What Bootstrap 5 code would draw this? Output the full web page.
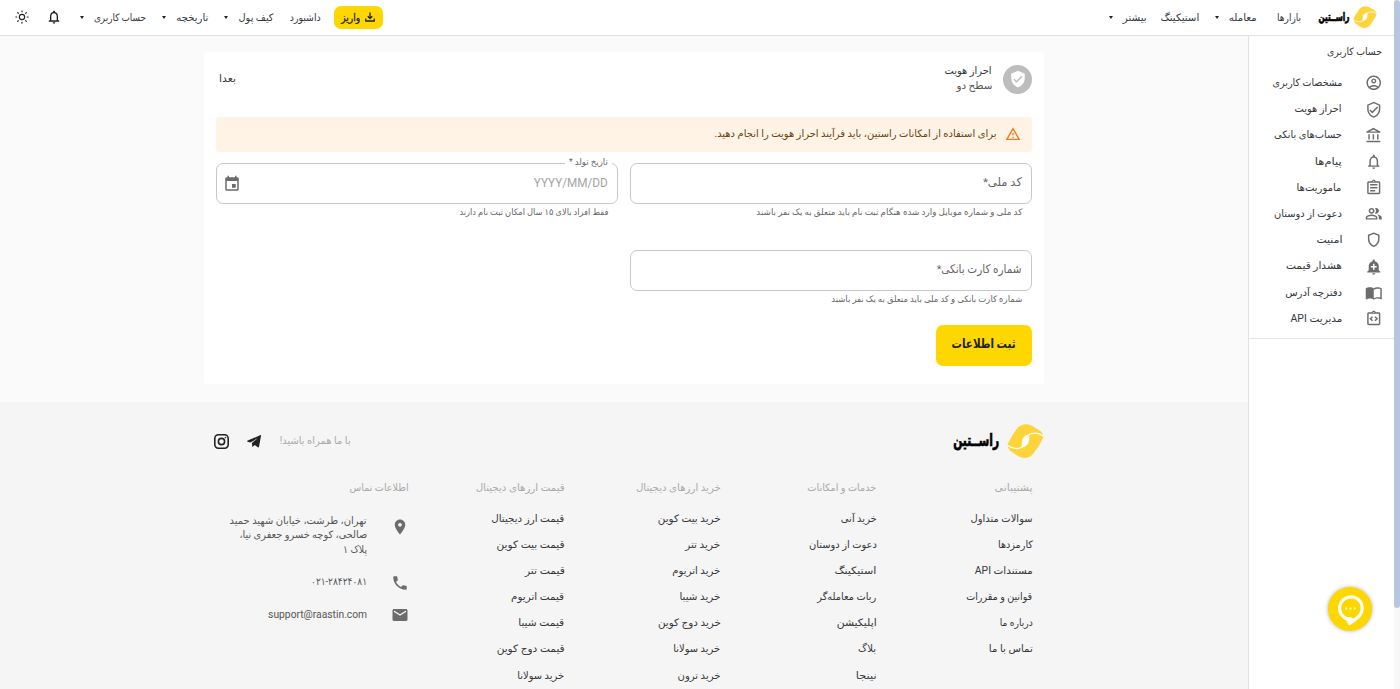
<!DOCTYPE html>
<html lang="fa" dir="rtl">
<head>
<meta charset="utf-8">
<meta name="viewport" content="width=device-width, initial-scale=1">
<title>راستین - احراز هویت</title>
<link href="https://cdn.jsdelivr.net/npm/bootstrap@5.3.0/dist/css/bootstrap.min.css" rel="stylesheet">
<style>
:root{--gold:#ffd700;--ink:#35373b;--soft:#6c6c6c}
html,body{height:100%}
body{font-family:Roboto,"DejaVu Sans",sans-serif;font-size:10.2px;line-height:15px;color:var(--ink);background:#fff;overflow:hidden}
svg{display:block;flex:none;fill:currentColor}
.fit{display:inline-block;white-space:nowrap;flex:none;text-align:right}
.fit>i{display:inline-block;font-style:normal;transform-origin:100% 50%}
.page-area{width:1394px;height:689px}
.scroll-rail{width:6px;height:689px;background:#f8f8f8}
.scroll-thumb{height:608px;background:#b9c7dc;border-radius:3px}
.topbar{height:36px;border-bottom:1px solid #e2e2e2;padding:0 17px 1px 15px;background:#fff}
.caret{width:0;height:0;border:2.5px solid transparent;border-top:3px solid #222;border-bottom:0;margin-top:1px}
.wordmark{font-family:"DejaVu Sans",sans-serif;font-weight:700;color:#000;-webkit-text-stroke:.7px #000}
.deposit{width:49px;height:23px;border-radius:7px;background:var(--gold);color:#222}
.side{width:146px;border-left:1px solid #e2e2e2;height:653px}
.side-box{height:303px;border-bottom:1px solid #e5e5e5;padding:8px 12px 0 0}
.side-row{height:26.2px}
.side-row svg{color:var(--soft);margin-left:22.5px}
.side-row .fit{margin-bottom:1px}
.side-list{padding-top:11px}
.content{width:1248px;background:#fafafa}
.kyc{width:840px;height:332px;background:#fff;border-radius:4px;padding:12px;margin:16px auto 18px}
.shield{width:29px;height:29px;border-radius:50%;background:#bdbdbd;color:#fff}
.notice{height:35px;background:#fff3e5;color:#6b4510;border-radius:3px;padding:0 11px 0 12px;margin-top:23px}
.notice .fit{margin-bottom:2px}
.notice svg{margin-bottom:1px}
.field{height:41px;border:1px solid #c8c8c8;border-radius:7px;padding:0 9px;color:#666;font-size:11.8px;position:relative}
.field>.fit{margin-bottom:3px}
.field-name{position:absolute;top:-9px;right:5px;background:#fff;padding:0 4px;font-size:9px;line-height:15px;color:#666}
.helper{font-size:8.8px;height:17px;line-height:17px;color:#666;padding-right:9.5px}
.submit{width:96px;height:41px;border-radius:7px;background:var(--gold);font-size:13px;font-weight:700;color:#222}
.foot{background:#f5f5f5;height:287px}
.foot-in{width:840px;margin:auto}
.brand-row{height:78px;padding-left:10px}
.fcol{width:156px;padding-right:11.5px}
.fhead{height:16px;color:#aaa;margin-bottom:14.5px}
.frow{height:26.2px}
.contact{width:204px}
.contact svg{color:var(--soft)}
.chat{position:absolute;left:1328px;top:587px;width:44px;height:44px;border-radius:50%;background:var(--gold);box-shadow:0 0 4px rgba(0,0,0,.3)}
</style>
<script src="https://cdn.jsdelivr.net/npm/bootstrap@5.3.0/dist/js/bootstrap.bundle.min.js"></script>
</head>
<body>
<svg width="0" height="0" class="position-absolute"><defs>
<symbol id="mark" viewBox="0 0 36 34"><path fill="#fdd53b" d="M0 21C1 17 7 8 10 4 14 0 19-.5 24 1.500L33 7c1.500 1.500 2.500 3 3 5.500C34 18 29 26 25.500 30 22 34.500 15 35 10.500 32L3 27C1.500 25.500.5 23.500 0 21Z"/><path fill="none" stroke="#fff" stroke-width="1.200" d="M0 21.200c4 3 9.500 4.200 14 2.300M36 12.300C32 9 26.500 8.200 21.500 10.500"/><path fill="#fff" d="M22.500 9.800c-4.500 1.200-7.500 3.600-8 7.400-.2 2.300-.2 4-.9 6.800 4.600-1.200 7.100-3.400 7.800-7 .4-2.500 0-4.600 1.100-7.200Z"/></symbol>
<symbol id="bell" viewBox="0 0 24 24"><path d="M12 22c1.100 0 2-.9 2-2h-4c0 1.100.9 2 2 2zm6-6v-5c0-3.070-1.630-5.640-4.500-6.320V4c0-.83-.67-1.500-1.500-1.500s-1.500.67-1.500 1.500v.68C7.640 5.360 6 7.920 6 11v5l-2 2v1h16v-1l-2-2zm-2 1H8v-6c0-2.480 1.510-4.500 4-4.500s4 2.020 4 4.500v6z"/></symbol>
</defs></svg>
<div class="d-flex">
<div class="scroll-rail order-first"><div class="scroll-thumb"></div></div>
<div class="page-area">
<nav class="topbar d-flex align-items-center">
  <svg width="24" height="22"><use href="#mark"/></svg>
  <span class="fit wordmark" data-w="31" style="margin-right:4px;font-size:11.500px">راســتین</span>
  <span class="fit" data-w="24" style="margin-right:17px">بازارها</span>
  <span class="fit" data-w="28" style="margin-right:20px">معامله</span>
  <b class="caret" style="margin-right:10px"></b>
  <span class="fit" data-w="39" style="margin-right:16px">استیکینگ</span>
  <span class="fit" data-w="24" style="margin-right:13px">بیشتر</span>
  <b class="caret" style="margin-right:10px"></b>
  <div class="deposit d-flex align-items-center justify-content-center gap-1 me-auto">
    <svg width="12" height="12" viewBox="0 0 24 24" stroke="currentColor" stroke-width="2.600"><path fill="none" d="M3.500 15v5h17v-5M12 3v12M7.500 10.500 12 15l4.500-4.500"/></svg>
    <span class="fit" data-w="19" style="-webkit-text-stroke:.3px">واریز</span>
  </div>
  <span class="fit" data-w="31" style="margin-right:13px">داشبورد</span>
  <span class="fit" data-w="35" style="margin-right:17px">کیف پول</span>
  <b class="caret" style="margin-right:10px"></b>
  <span class="fit" data-w="32" style="margin-right:16px">تاریخچه</span>
  <b class="caret" style="margin-right:10px"></b>
  <span class="fit" data-w="52" style="margin-right:16px">حساب کاربری</span>
  <b class="caret" style="margin-right:10px"></b>
  <svg width="16" height="16" style="margin-right:18px;color:#222"><use href="#bell"/></svg>
  <svg width="14" height="14" viewBox="0 0 24 24" style="margin-right:17px" stroke="#222" stroke-width="2"><circle cx="12" cy="12" r="4.500" fill="none"/><path stroke-linecap="round" d="M12 1.500v1.500M12 21v1.500M1.500 12h1.500M21 12h1.500M4.600 4.600l1 1M18.400 18.400l1 1M4.600 19.400l1-1M18.400 5.600l1-1"/></svg>
</nav>
<div class="d-flex">
<aside class="side">
  <div class="side-box">
  <span class="fit" data-w="55">حساب کاربری</span>
  <div class="side-list">
    <div class="side-row d-flex align-items-center"><svg width="17.500" height="17.500" viewBox="0 0 24 24"><path d="M12 2C6.480 2 2 6.480 2 12s4.480 10 10 10 10-4.480 10-10S17.520 2 12 2zM7.350 18.500C8.660 17.560 10.260 17 12 17s3.340.56 4.650 1.500C15.340 19.440 13.740 20 12 20s-3.340-.56-4.650-1.500zm10.790-1.380C16.450 15.800 14.320 15 12 15s-4.450.8-6.140 2.120C4.700 15.730 4 13.950 4 12c0-4.420 3.580-8 8-8s8 3.580 8 8c0 1.950-.7 3.730-1.860 5.120z"/><path d="M12 6c-1.930 0-3.500 1.570-3.500 3.500S10.070 13 12 13s3.500-1.570 3.500-3.500S13.930 6 12 6zm0 5c-.83 0-1.500-.67-1.500-1.500S11.170 8 12 8s1.500.67 1.500 1.500S12.830 11 12 11z"/></svg><span class="fit" data-w="70">مشخصات کاربری</span></div>
    <div class="side-row d-flex align-items-center"><svg width="17.500" height="17.500" viewBox="0 0 24 24"><path d="M12 1 3 5v6c0 5.550 3.840 10.740 9 12 5.160-1.260 9-6.450 9-12V5l-9-4zm7 10c0 4.520-2.980 8.690-7 9.930-4.020-1.240-7-5.410-7-9.930V6.300l7-3.110 7 3.110V11zm-11.590.59L6 13l4 4 8-8-1.410-1.420L10 14.170z"/></svg><span class="fit" data-w="47">احراز هویت</span></div>
    <div class="side-row d-flex align-items-center"><svg width="17.500" height="17.500" viewBox="0 0 24 24"><path d="M6.500 10h-2v7h2v-7zm6 0h-2v7h2v-7zm8.500 9H2v2h19v-2zm-2.500-9h-2v7h2v-7zm-7-6.740L16.710 6H6.290l5.210-2.740m0-2.260L2 6v2h19V6l-9.500-5z"/></svg><span class="fit" data-w="68">حساب‌های بانکی</span></div>
    <div class="side-row d-flex align-items-center"><svg width="17.500" height="17.500"><use href="#bell"/></svg><span class="fit" data-w="27">پیام‌ها</span></div>
    <div class="side-row d-flex align-items-center"><svg width="17.500" height="17.500" viewBox="0 0 24 24"><path d="M7 15h7v2H7zm0-4h10v2H7zm0-4h10v2H7zm12-4h-4.180C14.400 1.840 13.300 1 12 1c-1.300 0-2.400.84-2.820 2H5c-1.100 0-2 .9-2 2v14c0 1.100.9 2 2 2h14c1.100 0 2-.9 2-2V5c0-1.100-.9-2-2-2zm-7-.25c.41 0 .75.34.75.75s-.34.75-.75.75-.75-.34-.75-.75.34-.75.75-.75zM19 19H5V5h14v14z"/></svg><span class="fit" data-w="45">ماموریت‌ها</span></div>
    <div class="side-row d-flex align-items-center"><svg width="17.500" height="17.500" viewBox="0 0 24 24"><path d="M16.670 13.130C18.040 14.060 19 15.320 19 17v3h4v-3c0-2.180-3.570-3.470-6.330-3.870zM15 12c2.210 0 4-1.790 4-4s-1.790-4-4-4c-.47 0-.91.1-1.330.24C14.500 5.270 15 6.580 15 8s-.5 2.730-1.330 3.760c.42.14.86.24 1.330.24zM9 12c2.210 0 4-1.790 4-4s-1.790-4-4-4-4 1.790-4 4 1.790 4 4 4zm0-6c1.100 0 2 .9 2 2s-.9 2-2 2-2-.9-2-2 .9-2 2-2zm0 7c-2.670 0-8 1.340-8 4v3h16v-3c0-2.660-5.330-4-8-4zm6 5H3v-.99C3.200 16.290 6.300 15 9 15s5.800 1.290 6 2v1z"/></svg><span class="fit" data-w="68">دعوت از دوستان</span></div>
    <div class="side-row d-flex align-items-center"><svg width="17.500" height="17.500" viewBox="0 0 24 24"><path d="M12 2 4 5v6.090c0 5.050 3.410 9.760 8 10.910 4.590-1.150 8-5.860 8-10.910V5l-8-3zm6 9.090c0 4-2.550 7.700-6 8.830-3.450-1.130-6-4.820-6-8.830v-4.700l6-2.250 6 2.250v4.700z"/></svg><span class="fit" data-w="26">امنیت</span></div>
    <div class="side-row d-flex align-items-center"><svg width="17.500" height="17.500" viewBox="0 0 24 24"><path d="M10.010 21.010c0 1.100.89 1.990 1.990 1.990s1.990-.89 1.990-1.990h-3.980zm8.870-4.190V11c0-3.250-2.250-5.970-5.290-6.690v-.72C13.590 2.710 12.880 2 12 2s-1.590.71-1.590 1.590v.72C7.370 5.030 5.120 7.750 5.120 11v5.820L3 18.940V20h18v-1.060l-2.120-2.120zM16 13.010h-3v3h-2v-3H8V11h3V8h2v3h3v2.010z"/></svg><span class="fit" data-w="56">هشدار قیمت</span></div>
    <div class="side-row d-flex align-items-center"><svg width="17.500" height="17.500" viewBox="0 0 24 24"><path d="M21 5c-1.110-.35-2.330-.5-3.500-.5-1.950 0-4.050.4-5.500 1.500-1.450-1.100-3.550-1.500-5.500-1.500S2.450 4.900 1 6v14.650c0 .25.250.5.5.5.1 0 .15-.05.25-.05C3.100 20.450 5.050 20 6.500 20c1.950 0 4.050.4 5.500 1.500 1.350-.85 3.800-1.500 5.500-1.500 1.650 0 3.350.3 4.750 1.050.1.050.15.050.25.050.25 0 .5-.25.5-.5V6c-.6-.45-1.250-.75-2-1zm0 13.500c-1.100-.35-2.300-.5-3.500-.5-1.700 0-4.150.65-5.500 1.500V8c1.350-.85 3.800-1.500 5.500-1.500 1.200 0 2.400.15 3.500.5v11.500z"/></svg><span class="fit" data-w="57">دفترچه آدرس</span></div>
    <div class="side-row d-flex align-items-center"><svg width="17.500" height="17.500" viewBox="0 0 24 24"><path d="M11 14.170 8.830 12 11 9.830 9.590 8.410 6 12l3.590 3.590zm3.410 1.420L18 12l-3.590-3.590L13 9.830 15.170 12 13 14.170zM19 3h-4.180C14.400 1.840 13.300 1 12 1c-1.300 0-2.400.84-2.820 2H5c-1.100 0-2 .9-2 2v14c0 1.100.9 2 2 2h14c1.100 0 2-.9 2-2V5c0-1.100-.9-2-2-2zm-7-.25c.41 0 .75.34.75.75s-.34.75-.75.75-.75-.34-.75-.75.34-.75.75-.75zM19 19H5V5h14v14z"/></svg><span class="fit" data-w="52">مدیریت API</span></div>
  </div></div>
</aside>
<div class="content d-flow-root">
<main style="height:366px;padding-top:.1px">
 <section class="kyc">
  <div class="d-flex align-items-center" style="height:30px">
    <div class="shield d-flex align-items-center justify-content-center"><svg width="18" height="18" viewBox="0 0 24 24"><path d="M12 1 3 5v6c0 5.550 3.840 10.740 9 12 5.160-1.260 9-6.450 9-12V5l-9-4zm-2 16-4-4 1.410-1.410L10 14.170l6.590-6.590L18 9l-8 8z"/></svg></div>
    <div class="d-flex flex-column" style="margin-right:11px;margin-bottom:2px"><span class="fit" data-w="47">احراز هویت</span><span class="fit" data-w="36" style="color:#555">سطح دو</span></div>
    <span class="fit me-auto" data-w="17" style="margin-left:3px;margin-bottom:2px">بعدا</span>
  </div>
  <div class="notice d-flex align-items-center"><svg width="16" height="16" viewBox="0 0 24 24" style="color:#ed7a1c;margin-left:9px"><path d="M12 5.990 19.530 19H4.470L12 5.990M12 2 1 21h22L12 2zm1 14h-2v2h2v-2zm0-6h-2v4h2v-4z"/></svg><span class="fit" data-w="282">برای استفاده از امکانات راستین، باید فرآیند احراز هویت را انجام دهید.</span></div>
  <div class="d-flex" style="gap:12px;margin-top:11px">
    <div style="width:402px"><div class="field d-flex align-items-center"><span class="fit" data-w="39">کد ملی*</span></div><div class="helper"><span class="fit" data-w="266">کد ملی و شماره موبایل وارد شده هنگام ثبت نام باید متعلق به یک نفر باشند</span></div></div>
    <div style="width:402px"><div class="field d-flex align-items-center justify-content-between"><span class="field-name"><span class="fit" data-w="39">تاریخ تولد *</span></span><span class="fit" data-w="74" style="color:#a4a4a4;font-size:12px;margin-bottom:1px">YYYY/MM/DD</span><svg width="18" height="18" viewBox="0 0 24 24" style="margin-left:-3px;color:#6c6c6c"><path d="M17 12h-5v5h5v-5zM16 1v2H8V1H6v2H5c-1.110 0-1.990.9-1.990 2L3 19c0 1.100.89 2 2 2h14c1.100 0 2-.9 2-2V5c0-1.100-.9-2-2-2h-1V1h-2zm3 18H5V8h14v11z"/></svg></div><div class="helper"><span class="fit" data-w="149">فقط افراد بالای ۱۵ سال امکان ثبت نام دارند</span></div></div>
  </div>
  <div style="width:402px;margin-top:29px"><div class="field d-flex align-items-center"><span class="fit" data-w="85">شماره کارت بانکی*</span></div><div class="helper"><span class="fit" data-w="191">شماره کارت بانکی و کد ملی باید متعلق به یک نفر باشند</span></div></div>
  <div class="submit d-flex align-items-center justify-content-center" style="margin-top:17px"><span class="fit" data-w="64" style="margin-bottom:4px">ثبت اطلاعات</span></div>
 </section>
</main>
<footer class="foot"><div class="foot-in">
  <div class="brand-row d-flex align-items-center"><svg width="37" height="34"><use href="#mark"/></svg><span class="fit wordmark" data-w="46" style="margin-right:8px;margin-bottom:2px;font-size:17px;line-height:28px">راســتین</span>
   <span class="fit me-auto" data-w="71" style="color:#aaa;margin-bottom:1px">با ما همراه باشید!</span>
   <svg width="15" height="15" viewBox="0 0 24 24" style="margin-right:18px;margin-left:1px;color:#222"><path d="m22.500 2.500-3.300 18c-.2 1.100-1 1.300-1.900.8l-5-3.800-2.600 2.600c-.7.7-1.200.4-1.300-.5l-.5-5.400L17.500 6.500 5.500 13.500 1 12.200c-1.100-.4-1.100-1.200.2-1.700L21 2c1-.4 1.700-.3 1.500.5Z"/></svg>
   <svg width="15" height="15" viewBox="0 0 15 15" style="margin-right:17px" stroke="#222" stroke-width="1.600"><rect x=".8" y=".8" width="13.400" height="13.400" rx="3.600" fill="none"/><circle cx="7.500" cy="7.500" r="3.100" fill="none"/><circle cx="11.400" cy="3.600" r=".4" stroke-width=".9"/></svg>
  </div>
  <div class="d-flex">
   <div class="fcol"><div class="fhead"><span class="fit" data-w="38">پشتیبانی</span></div>
    <div class="frow"><span class="fit" data-w="62">سوالات متداول</span></div><div class="frow"><span class="fit" data-w="35">کارمزدها</span></div><div class="frow"><span class="fit" data-w="58">مستندات API</span></div><div class="frow"><span class="fit" data-w="66">قوانین و مقررات</span></div><div class="frow"><span class="fit" data-w="33">درباره ما</span></div><div class="frow"><span class="fit" data-w="44">تماس با ما</span></div></div>
   <div class="fcol"><div class="fhead"><span class="fit" data-w="69">خدمات و امکانات</span></div>
    <div class="frow"><span class="fit" data-w="36">خرید آنی</span></div><div class="frow"><span class="fit" data-w="68">دعوت از دوستان</span></div><div class="frow"><span class="fit" data-w="42">استیکینگ</span></div><div class="frow"><span class="fit" data-w="59">ربات معامله‌گر</span></div><div class="frow"><span class="fit" data-w="40">اپلیکیشن</span></div><div class="frow"><span class="fit" data-w="18">بلاگ</span></div><div class="frow"><span class="fit" data-w="21">نینجا</span></div></div>
   <div class="fcol"><div class="fhead"><span class="fit" data-w="85">خرید ارزهای دیجیتال</span></div>
    <div class="frow"><span class="fit" data-w="63">خرید بیت کوین</span></div><div class="frow"><span class="fit" data-w="35">خرید تتر</span></div><div class="frow"><span class="fit" data-w="48">خرید اتریوم</span></div><div class="frow"><span class="fit" data-w="41">خرید شیبا</span></div><div class="frow"><span class="fit" data-w="63">خرید دوج کوین</span></div><div class="frow"><span class="fit" data-w="47">خرید سولانا</span></div><div class="frow"><span class="fit" data-w="43">خرید ترون</span></div></div>
   <div class="fcol"><div class="fhead"><span class="fit" data-w="89">قیمت ارزهای دیجیتال</span></div>
    <div class="frow"><span class="fit" data-w="73">قیمت ارز دیجیتال</span></div><div class="frow"><span class="fit" data-w="68">قیمت بیت کوین</span></div><div class="frow"><span class="fit" data-w="40">قیمت تتر</span></div><div class="frow"><span class="fit" data-w="53">قیمت اتریوم</span></div><div class="frow"><span class="fit" data-w="46">قیمت شیبا</span></div><div class="frow"><span class="fit" data-w="68">قیمت دوج کوین</span></div><div class="frow"><span class="fit" data-w="47">خرید سولانا</span></div></div>
   <div class="contact" style="padding-right:11.500px"><div class="fhead"><span class="fit" data-w="59">اطلاعات تماس</span></div>
    <div class="d-flex" style="padding-top:3px;color:#555"><svg width="18" height="18" viewBox="0 0 24 24" style="margin:4px 0 0 23.500px"><path d="M12 2C8.130 2 5 5.130 5 9c0 5.250 7 13 7 13s7-7.750 7-13c0-3.870-3.130-7-7-7zm0 9.500c-1.380 0-2.500-1.120-2.500-2.500s1.120-2.500 2.500-2.500 2.500 1.120 2.500 2.500-1.120 2.500-2.500 2.500z"/></svg><div class="d-flex flex-column" style="line-height:14.600px"><span class="fit" data-w="137">تهران، طرشت، خیابان شهید حمید</span><span class="fit" data-w="128">صالحی، کوچه خسرو جعفری نیا،</span><span class="fit" data-w="24">پلاک ۱</span></div></div>
    <div class="d-flex align-items-center" style="height:32px;margin-top:9.500px;color:#555"><svg width="18" height="18" viewBox="0 0 24 24" style="margin-left:23.500px"><path d="M6.620 10.790c1.440 2.830 3.760 5.140 6.590 6.590l2.200-2.200c.27-.27.67-.36 1.020-.24 1.120.37 2.330.57 3.570.57.55 0 1 .45 1 1V20c0 .55-.45 1-1 1-9.390 0-17-7.610-17-17 0-.55.45-1 1-1h3.500c.55 0 1 .45 1 1 0 1.250.2 2.450.57 3.570.11.35.03.74-.25 1.020l-2.200 2.200z"/></svg><span class="fit" data-w="56" dir="ltr" style="margin-bottom:2px">۰۲۱-۲۸۴۲۴۰۸۱</span></div>
    <div class="d-flex align-items-center" style="height:32px;color:#555"><svg width="18" height="18" viewBox="0 0 24 24" style="margin-left:23.500px"><path d="M20 4H4c-1.100 0-1.990.9-1.990 2L2 18c0 1.100.9 2 2 2h16c1.100 0 2-.9 2-2V6c0-1.100-.9-2-2-2zm0 4-8 5-8-5V6l8 5 8-5v2z"/></svg><span class="fit" data-w="99" style="font-size:10.500px;margin-bottom:1px">support@raastin.com</span></div>
   </div>
  </div>
</div></footer>
</div>
</div>
</div>
</div>
<div class="chat"><svg width="44" height="44" viewBox="0 0 44 44"><path fill="none" stroke="#fff" stroke-width="3.200" stroke-linejoin="round" d="M20.500 32.200A11.300 11.300 0 1 1 31.500 28.500Q27 33.500 21.500 36.500v-4.300Z"/><path fill="#fff" d="M16 30h6l5 2-6.500 5.500Z"/><g fill="#fff6a8"><circle cx="18.300" cy="21.500" r="1.200"/><circle cx="22.500" cy="21.500" r="1.200"/><circle cx="26.700" cy="21.500" r="1.200"/></g></svg></div>
<script>
document.querySelectorAll('.fit').forEach(function(el){
  var i=document.createElement('i');
  while(el.firstChild)i.appendChild(el.firstChild);
  el.appendChild(i);
  var w=+el.dataset.w,n=i.getBoundingClientRect().width;
  el.style.width=w+'px';
  i.style.transform='scaleX('+(w/n)+')';
  if(n>w)i.style.marginLeft=(w-n)+'px';
});
</script>
</body>
</html>
